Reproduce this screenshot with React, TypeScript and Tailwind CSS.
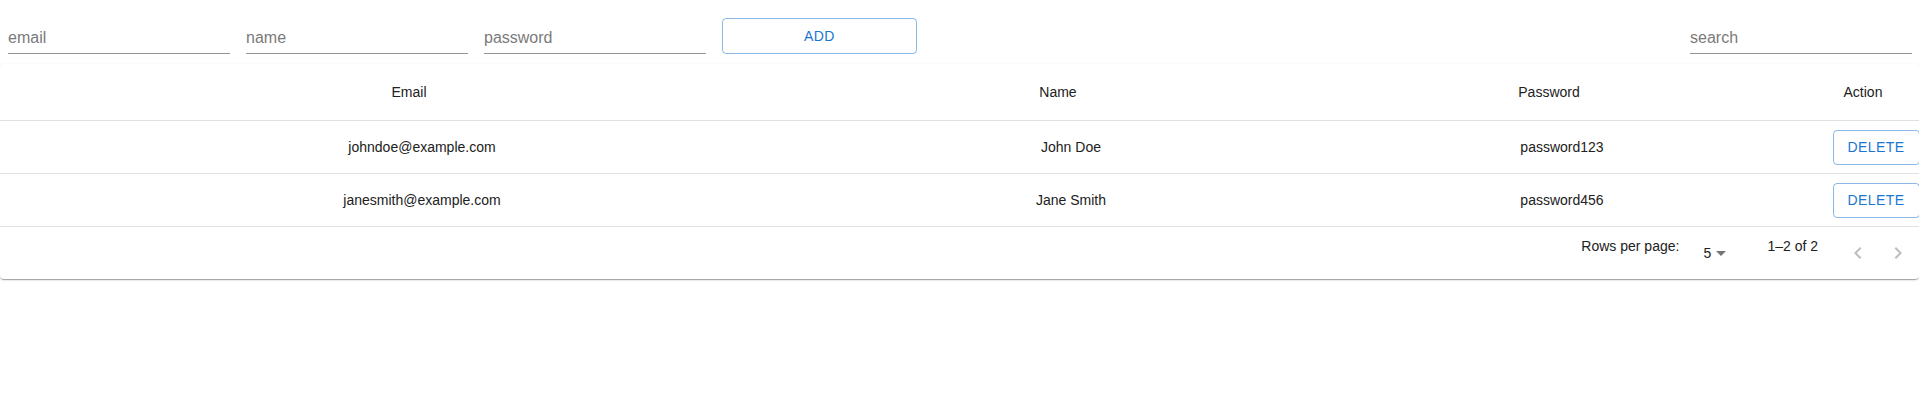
import React from "react";

function Field({ placeholder, className = "" }: { placeholder: string; className?: string }) {
  return (
    <input
      placeholder={placeholder}
      className={
        "w-[222px] h-[32px] pt-[5px] pb-[4px] border-b border-[#949494] bg-transparent text-[16px] leading-[23px] text-[#212121] placeholder:text-[#7a7a7a] outline-none " +
        className
      }
    />
  );
}

function ChevronLeft() {
  return (
    <svg width="24" height="24" viewBox="0 0 24 24" fill="#bdbdbd">
      <path d="M15.41 16.59 10.83 12l4.58-4.59L14 6l-6 6 6 6 1.41-1.41z" />
    </svg>
  );
}

function ChevronRight() {
  return (
    <svg width="24" height="24" viewBox="0 0 24 24" fill="#bdbdbd">
      <path d="M8.59 16.59 13.17 12 8.59 7.41 10 6l6 6-6 6-1.41-1.41z" />
    </svg>
  );
}

export default function App() {
  const rows = [
    { email: "johndoe@example.com", name: "John Doe", password: "password123" },
    { email: "janesmith@example.com", name: "Jane Smith", password: "password456" },
  ];
  const grid = "grid grid-cols-[818px_480px_502px_126px] w-[1926px]";
  const headCell = "h-[57px] px-4 flex items-center justify-center border-b border-[#e0e0e0] text-[14px] leading-[24px] text-[#212121]";
  const bodyCell = "h-[53px] pl-[42px] pr-4 flex items-center justify-center border-b border-[#e0e0e0] text-[14px] leading-[20px] text-[#212121]";

  return (
    <div className="w-[1919px] h-[410px] bg-white overflow-hidden font-['Liberation_Sans',Arial,sans-serif]">
      <div className="flex items-end pt-[18px] pb-[10px] pl-[8px] pr-[7px]">
        <Field placeholder="email" />
        <Field placeholder="name" className="ml-4" />
        <Field placeholder="password" className="ml-4" />
        <button className="ml-4 w-[195px] h-[36px] rounded-[4px] border border-[#1976d2]/50 text-[#1976d2] text-[14px] font-medium tracking-[0.4px] uppercase">
          ADD
        </button>
        <Field placeholder="search" className="ml-auto" />
      </div>

      <div className="w-full rounded-[4px] bg-white overflow-hidden shadow-[0px_2px_1px_-1px_rgba(0,0,0,0.2),0px_1px_1px_0px_rgba(0,0,0,0.14),0px_1px_3px_0px_rgba(0,0,0,0.12)]">
        <div className="overflow-hidden">
          <div className={grid}>
            <div className={headCell}>Email</div>
            <div className={headCell}>Name</div>
            <div className={headCell}>Password</div>
            <div className={headCell}>Action</div>
            {rows.map((r) => (
              <React.Fragment key={r.email}>
                <div className={bodyCell}>{r.email}</div>
                <div className={bodyCell}>{r.name}</div>
                <div className={bodyCell}>{r.password}</div>
                <div className={bodyCell}>
                  <button className="shrink-0 w-[87px] h-[35px] rounded-[4px] border border-[#1976d2]/50 text-[#1976d2] text-[14px] font-medium tracking-[0.4px] uppercase">
                    DELETE
                  </button>
                </div>
              </React.Fragment>
            ))}
          </div>
        </div>
        <div className="h-[52px] flex items-center justify-end pr-[1px] text-[14px] leading-[20px] text-[#212121]">
          <p className="mb-[14px]">Rows per page:</p>
          <div className="relative ml-[8px] mr-[32px] flex items-center">
            <span className="pl-[8px] pr-[24px]">
              <span className="block w-[16px] text-right">5</span>
            </span>
            <svg
              className="absolute right-[2px] top-1/2 -translate-y-1/2"
              width="24"
              height="24"
              viewBox="0 0 24 24"
              fill="#757575"
            >
              <path d="M7 10l5 5 5-5z" />
            </svg>
          </div>
          <p className="mb-[14px]">1–2 of 2</p>
          <div className="ml-[20px] flex">
            <button className="w-[40px] h-[40px] flex items-center justify-center">
              <ChevronLeft />
            </button>
            <button className="w-[40px] h-[40px] flex items-center justify-center">
              <ChevronRight />
            </button>
          </div>
        </div>
      </div>
    </div>
  );
}
